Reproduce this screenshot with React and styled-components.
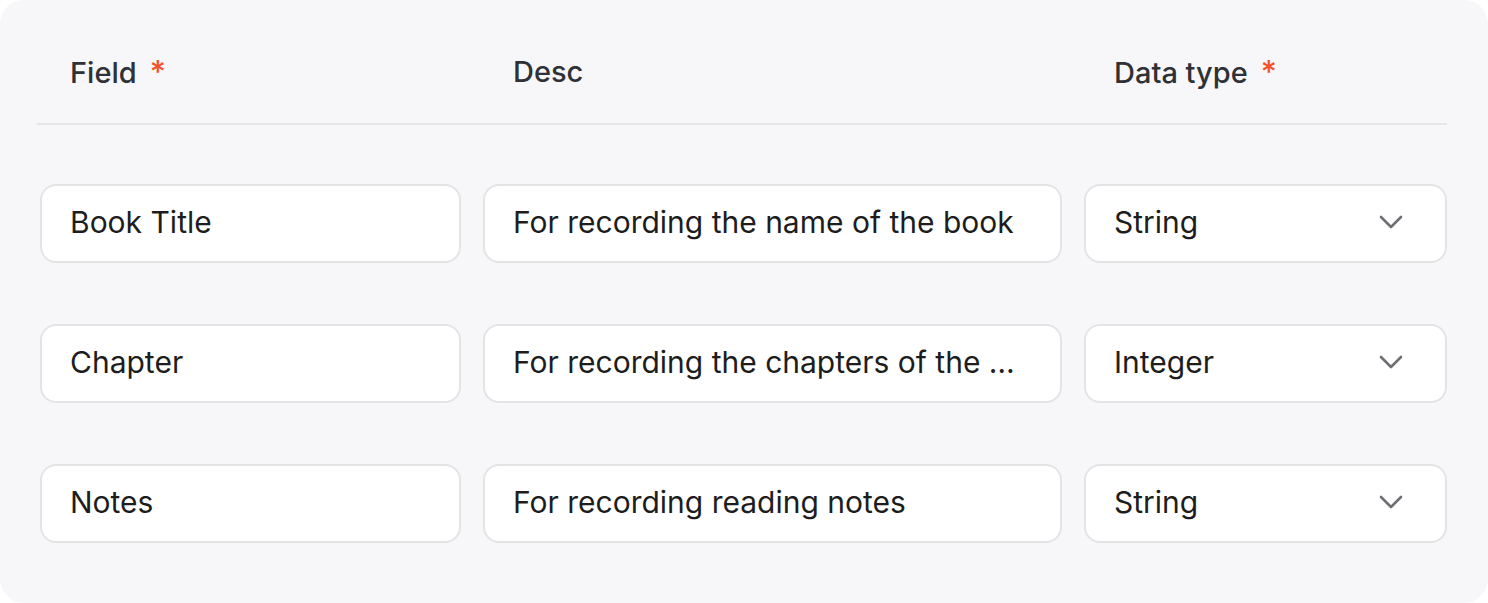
import React from "react";
import styled, { createGlobalStyle } from "styled-components";

const GlobalStyle = createGlobalStyle`
  html, body {
    margin: 0;
    padding: 0;
    background: #ffffff;
  }
  body {
    font-family: Inter, "Noto Sans", "Liberation Sans", sans-serif;
    -webkit-font-smoothing: antialiased;
  }
`;

const Panel = styled.div`
  box-sizing: border-box;
  width: 1488px;
  height: 603px;
  background: #f7f7f9;
  border-radius: 24px;
  padding: 0 41px 0 40px;
`;

const Grid = styled.div`
  display: grid;
  grid-template-columns: 421px 579px 363px;
  column-gap: 22px;
`;

const HeaderRow = styled(Grid)`
  box-sizing: border-box;
  height: 125px;
  padding-top: 20px;
  align-items: center;
  border-bottom: 2px solid #e6e6e9;
  margin-left: -3px;
  padding-left: 3px;
`;

const HeaderCell = styled.div`
  padding-left: 30px;
  font-size: 29px;
  font-weight: 500;
  color: #2f3136;
`;

const Required = styled.span`
  color: #f5502a;
  margin-left: 13px;
  font-size: 31px;
`;

const Rows = styled.div`
  display: flex;
  flex-direction: column;
  gap: 61px;
  padding-top: 59px;
`;

const Box = styled.div`
  box-sizing: border-box;
  height: 79px;
  background: #ffffff;
  border: 2px solid #e4e4e7;
  border-radius: 16px;
  display: flex;
  align-items: center;
  padding: 0 ${(p) => p.$padRight || 28}px 3px 28px;
  font-size: 30px;
  color: #1d1d20;
  min-width: 0;
`;

const Text = styled.span`
  flex: 1;
  min-width: 0;
  white-space: nowrap;
  overflow: hidden;
  text-overflow: ellipsis;
`;

const Chevron = () => (
  <svg width="24" height="14" viewBox="0 0 24 14" fill="none">
    <path
      d="M2 2 L12 12 L22 2"
      stroke="#6e6e73"
      strokeWidth="2.6"
      strokeLinecap="round"
      strokeLinejoin="round"
    />
  </svg>
);

const rows = [
  { field: "Book Title", desc: "For recording the name of the book", type: "String" },
  { field: "Chapter", desc: "For recording the chapters of the book", type: "Integer" },
  { field: "Notes", desc: "For recording reading notes", type: "String" },
];

export default function App() {
  return (
    <>
      <GlobalStyle />
      <Panel>
        <HeaderRow>
          <HeaderCell>
            Field<Required>*</Required>
          </HeaderCell>
          <HeaderCell>Desc</HeaderCell>
          <HeaderCell>
            Data type<Required>*</Required>
          </HeaderCell>
        </HeaderRow>
        <Rows>
          {rows.map((r) => (
            <Grid key={r.field}>
              <Box>
                <Text>{r.field}</Text>
              </Box>
              <Box $padRight={30}>
                <Text>{r.desc}</Text>
              </Box>
              <Box $padRight={42}>
                <Text>{r.type}</Text>
                <Chevron />
              </Box>
            </Grid>
          ))}
        </Rows>
      </Panel>
    </>
  );
}
